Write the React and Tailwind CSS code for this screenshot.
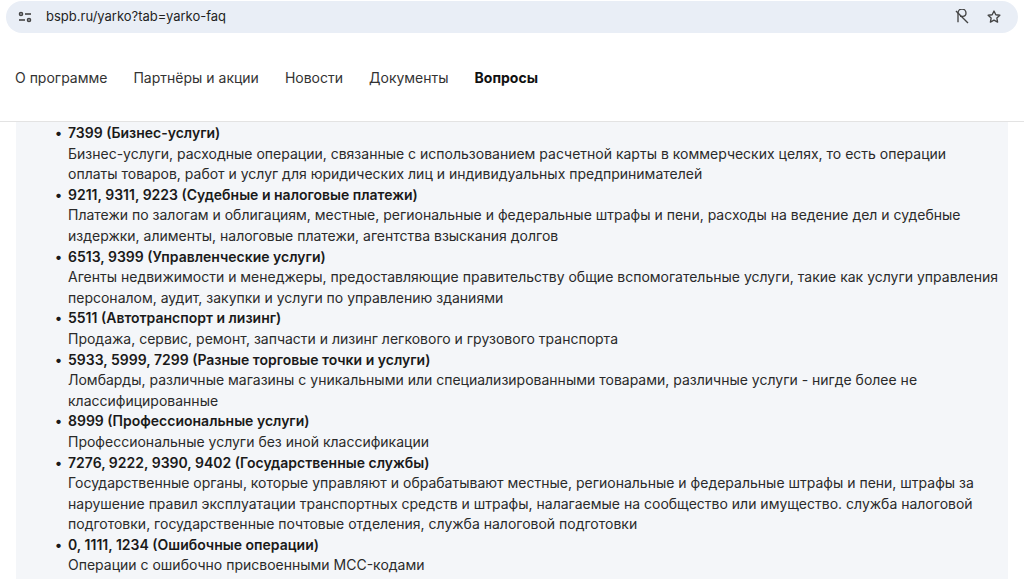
export default function App(){
const items=[
["7399 (Бизнес-услуги)",["Бизнес-услуги, расходные операции, связанные с использованием расчетной карты в коммерческих целях, то есть операции","оплаты товаров, работ и услуг для юридических лиц и индивидуальных предпринимателей"]],
["9211, 9311, 9223 (Судебные и налоговые платежи)",["Платежи по залогам и облигациям, местные, региональные и федеральные штрафы и пени, расходы на ведение дел и судебные","издержки, алименты, налоговые платежи, агентства взыскания долгов"]],
["6513, 9399 (Управленческие услуги)",["Агенты недвижимости и менеджеры, предоставляющие правительству общие вспомогательные услуги, такие как услуги управления","персоналом, аудит, закупки и услуги по управлению зданиями"]],
["5511 (Автотранспорт и лизинг)",["Продажа, сервис, ремонт, запчасти и лизинг легкового и грузового транспорта"]],
["5933, 5999, 7299 (Разные торговые точки и услуги)",["Ломбарды, различные магазины с уникальными или специализированными товарами, различные услуги - нигде более не","классифицированные"]],
["8999 (Профессиональные услуги)",["Профессиональные услуги без иной классификации"]],
["7276, 9222, 9390, 9402 (Государственные службы)",["Государственные органы, которые управляют и обрабатывают местные, региональные и федеральные штрафы и пени, штрафы за","нарушение правил эксплуатации транспортных средств и штрафы, налагаемые на сообщество или имущество. служба налоговой","подготовки, государственные почтовые отделения, служба налоговой подготовки"]],
["0, 1111, 1234 (Ошибочные операции)",["Операции с ошибочно присвоенными MCC-кодами"]],
];
return <div className="w-[1024px] h-[579px] overflow-hidden bg-white text-[#1f1f1f]" style={{fontFamily:"Inter, 'Open Sans', sans-serif"}}>
<div className="h-[36px] px-[6px] pt-[1px] bg-white">
<div className="h-[32px] rounded-full bg-[#e9eef6] flex items-center px-[12px]">
<svg width="14" height="14" viewBox="0 0 14 14" fill="none" stroke="#444" strokeWidth="1.6"><circle cx="3" cy="4" r="1.5"/><line x1="7" y1="4" x2="13" y2="4"/><line x1="1" y1="10" x2="7" y2="10"/><circle cx="11" cy="10" r="1.5"/></svg>
<span className="ml-[14px] text-[13px] text-[#1f1f1f]">bspb.ru/yarko?tab=yarko-faq</span>
<div className="ml-auto flex items-center gap-[16px] pr-[4px]">
<svg width="16" height="16" viewBox="0 0 24 24" fill="none" stroke="#444" strokeWidth="2"><path d="M6 20V6a6 6 0 0 1 12 0c0 3-2 5-5 5H9"/><line x1="3" y1="3" x2="21" y2="21"/></svg>
<svg width="16" height="16" viewBox="0 0 24 24" fill="none" stroke="#444" strokeWidth="2" strokeLinejoin="round"><path d="M12 3l2.7 5.6 6.1.8-4.5 4.2 1.1 6-5.4-3-5.4 3 1.1-6-4.5-4.2 6.1-.8z"/></svg>
</div></div></div>
<div className="h-[86px] border-b border-[#e3e3e3] flex items-center gap-[26px] pl-[15px] text-[14px] text-[#333] pb-[2px]">
<span>О программе</span><span>Партнёры и акции</span><span>Новости</span><span>Документы</span><span className="font-bold text-[#111]">Вопросы</span>
</div>
<div className="mx-[16px] w-[992px] bg-[#f4f6f9] pt-[1px] h-[500px]">
{items.map(([t,ls],i)=><div key={i} className="text-[14px] leading-[20.6px] whitespace-nowrap">
<div className="flex font-semibold text-[#1a1a1a]"><span className="w-[52px] text-right pr-[6px]">•</span><span>{t}</span></div>
{ls.map((l,j)=><div key={j} className="pl-[52px] text-[#2a2a2a]">{l}</div>)}
</div>)}
</div>
</div>}
